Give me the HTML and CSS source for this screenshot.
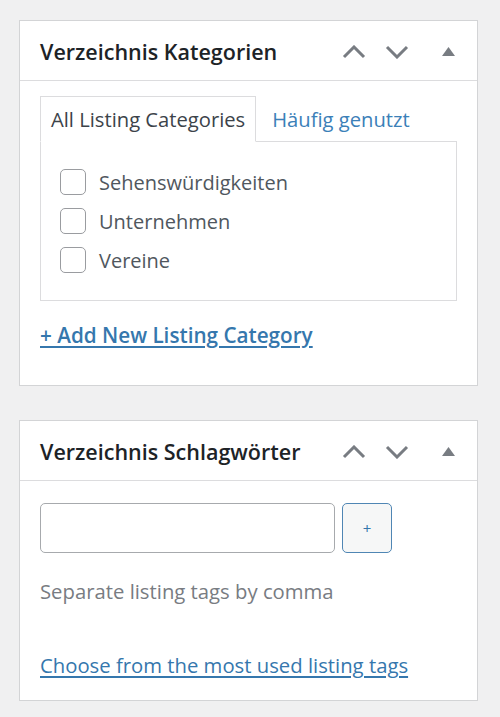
FILE: index.html
```html
<!DOCTYPE html>
<html lang="de">
<head>
<meta charset="utf-8">
<link rel="stylesheet" href="styles.css">
</head>
<body>
<div class="postbox box-cat">
  <div class="postbox-header">
    <h2 class="hndle">Verzeichnis Kategorien</h2>
    <div class="handle-actions">
      <span class="act act-up"><svg width="24" height="14" viewBox="0 0 24 14"><path d="M2 12 L12 2 L22 12" fill="none" stroke="#787c82" stroke-width="3"/></svg></span>
      <span class="act act-down"><svg width="24" height="14" viewBox="0 0 24 14"><path d="M2 2 L12 12 L22 2" fill="none" stroke="#787c82" stroke-width="3"/></svg></span>
      <span class="act act-toggle"><svg width="13" height="9" viewBox="0 0 13 9"><path d="M6.5 0 L13 9 L0 9 Z" fill="#787c82"/></svg></span>
    </div>
  </div>
  <div class="inside">
    <ul class="tabs">
      <li class="tab active">All Listing Categories</li>
      <li class="tab"><a class="tab-link">Häufig genutzt</a></li>
    </ul>
    <div class="tabs-panel">
      <label class="cat"><span class="cb"></span>Sehenswürdigkeiten</label>
      <label class="cat"><span class="cb"></span>Unternehmen</label>
      <label class="cat"><span class="cb"></span>Vereine</label>
    </div>
    <p class="add-new"><a class="link link-add">+ Add New Listing Category</a></p>
  </div>
</div>

<div class="postbox box-tag">
  <div class="postbox-header">
    <h2 class="hndle">Verzeichnis Schlagwörter</h2>
    <div class="handle-actions">
      <span class="act act-up"><svg width="24" height="14" viewBox="0 0 24 14"><path d="M2 12 L12 2 L22 12" fill="none" stroke="#787c82" stroke-width="3"/></svg></span>
      <span class="act act-down"><svg width="24" height="14" viewBox="0 0 24 14"><path d="M2 2 L12 12 L22 2" fill="none" stroke="#787c82" stroke-width="3"/></svg></span>
      <span class="act act-toggle"><svg width="13" height="9" viewBox="0 0 13 9"><path d="M6.5 0 L13 9 L0 9 Z" fill="#787c82"/></svg></span>
    </div>
  </div>
  <div class="inside inside-tag">
    <div class="tag-row">
      <div class="tag-input"></div>
      <div class="tag-btn">+</div>
    </div>
    <p class="howto">Separate listing tags by comma</p>
    <p class="most-used"><a class="link">Choose from the most used listing tags</a></p>
  </div>
</div>
</body>
</html>
```
FILE: styles.css
```css
html, body {
  margin: 0;
  padding: 0;
  background: #f0f0f1;
  font-family: "Open Sans", "Noto Sans", sans-serif;
}
body {
  padding-top: 20px;
  height: 717px;
  box-sizing: border-box;
  overflow: hidden;
}
.postbox {
  margin-left: 19px;
  width: 459px;
  box-sizing: border-box;
  background: #fff;
  border: 1px solid #d3d4d6;
}
.box-cat { height: 366px; }
.box-tag { margin-top: 34px; height: 281px; }
.postbox-header {
  height: 60px;
  box-sizing: border-box;
  border-bottom: 1px solid #dcdcde;
  display: flex;
  align-items: center;
  padding-left: 20px;
  padding-top: 2px;
}
.hndle {
  margin: 0;
  flex: 1;
  font-size: 21.5px;
  font-weight: 600;
  color: #1d2327;
}
.handle-actions {
  display: flex;
  align-items: center;
  padding-right: 22px;
}
.act { display: flex; align-items: center; }
.act-up { margin-right: 19px; }
.act-down { margin-right: 33px; }
.inside {
  padding: 15px 20px 0 20px;
}
.tabs {
  list-style: none;
  margin: 0;
  padding: 0;
  display: flex;
  position: relative;
  z-index: 1;
}
.tab {
  height: 46px;
  box-sizing: border-box;
  display: flex;
  align-items: center;
  padding: 0 10px;
  font-size: 20.2px;
  color: #3c434a;
  border: 1px solid transparent;
  margin-bottom: -1px;
}
.tab.active {
  border-color: #dcdcde;
  border-bottom-color: #fff;
  background: #fff;
}
.tab-link { color: #3b80b8; padding-left: 5px; }
.tabs-panel {
  border: 1px solid #dcdcde;
  height: 160px;
  box-sizing: border-box;
  padding: 27px 19px 0 19px;
  display: flex;
  flex-direction: column;
  gap: 13px;
}
.cat {
  display: flex;
  align-items: center;
  font-size: 20px;
  color: #50575e;
  height: 26px;
}
.cb {
  width: 26px;
  height: 26px;
  box-sizing: border-box;
  border: 1.5px solid #9a9ca0;
  border-radius: 5px;
  margin-right: 13px;
}
.add-new {
  margin: 20px 0 0 0;
  font-size: 20.7px;
}
.link {
  color: #3577ad;
  text-decoration: underline;
  text-underline-offset: 3px;
}
.link-add { font-weight: 600; }
.inside-tag { padding-top: 22px; }
.tag-row { display: flex; gap: 7px; }
.tag-input {
  width: 295px;
  height: 50px;
  box-sizing: border-box;
  border: 1.5px solid #a7aaad;
  border-radius: 5px;
}
.tag-btn {
  width: 50px;
  height: 50px;
  box-sizing: border-box;
  border: 1.5px solid #4f86b4;
  border-radius: 5px;
  background: #f6f7f7;
  color: #3577ad;
  display: flex;
  align-items: center;
  justify-content: center;
  font-size: 15px;
}
.howto {
  margin: 24px 0 0 0;
  font-size: 20.3px;
  color: #787c82;
}
.most-used {
  margin: 46px 0 0 0;
  font-size: 20.3px;
}
```
